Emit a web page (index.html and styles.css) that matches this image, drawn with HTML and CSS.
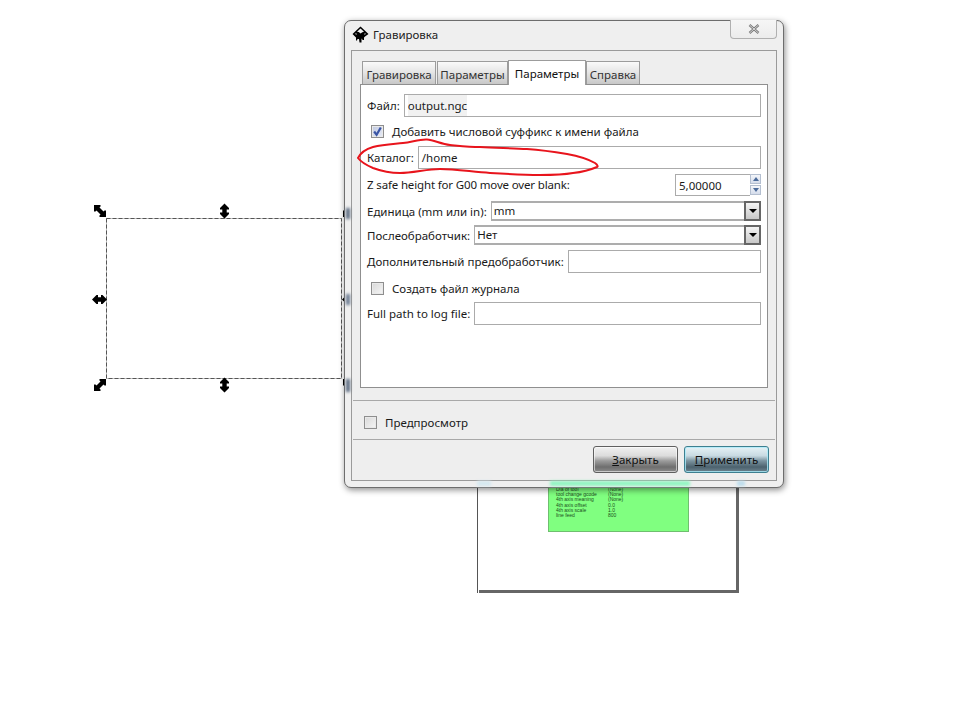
FILE: index.html
```html
<!DOCTYPE html>
<html lang="ru">
<head>
<meta charset="utf-8">
<title>Гравировка</title>
<link rel="stylesheet" href="styles.css">
</head>
<body>
<svg class="defs" width="0" height="0" aria-hidden="true">
  <defs>
    <path id="arrow" d="M0 -7.5 L4.5 -3 L4.5 -1.5 L2.2 -1.5 L2.2 1.5 L4.5 1.5 L4.5 3 L0 7.5 L-4.5 3 L-4.5 1.5 L-2.2 1.5 L-2.2 -1.5 L-4.5 -1.5 L-4.5 -3 Z"/>
    <path id="diag" d="M-6 -6 L0.5 -6 L0.5 -4.5 L-0.5 -3.5 L3.5 0.5 L4.5 -0.5 L6 -0.5 L6 6 L-0.5 6 L-0.5 4.5 L0.5 3.5 L-3.5 -0.5 L-4.5 0.5 L-6 0.5 Z"/>
  </defs>
</svg>

<main class="canvas">
  <div class="sheet">
    <div class="legend">
      <span class="lg-a">Dia of tool</span><span class="lg-b">(None)</span>
      <span class="lg-a">tool change gcode</span><span class="lg-b">(None)</span>
      <span class="lg-a">4th axis meaning</span><span class="lg-b">(None)</span>
      <span class="lg-a">4th axis offset</span><span class="lg-b">0.0</span>
      <span class="lg-a">4th axis scale</span><span class="lg-b">1.0</span>
      <span class="lg-a">line feed</span><span class="lg-b">800</span>
    </div>
  </div>

  <svg class="handles" width="290" height="200" viewBox="90 200 290 200">
    <rect class="sel-base" x="106.5" y="218.5" width="235" height="160"/>
    <rect class="sel-dash" x="106.5" y="218.5" width="235" height="160"/>
    <use href="#diag" x="100" y="211"/>
    <use href="#arrow" x="224.5" y="211"/>
    <use href="#arrow" transform="translate(99.5 299.5) rotate(90)"/>
    <use href="#diag" transform="translate(100 385) rotate(90)"/>
    <use href="#arrow" x="224.5" y="385"/>
    <use href="#diag" transform="translate(349 211) rotate(90)"/>
    <use href="#arrow" transform="translate(349.5 299.5) rotate(90)"/>
    <use href="#diag" x="349" y="385"/>
  </svg>

  <section class="window">
    <span class="glass glass-a"></span>
    <span class="glass glass-b"></span>
    <span class="glass glass-c"></span>
    <span class="glass glass-d"></span>
    <span class="glass glass-e"></span>
    <span class="glass glass-f"></span>

    <header class="titlebar">
      <svg class="app-icon" width="17" height="17" viewBox="0 0 17 17">
        <path d="M8.5 0.5 L16.5 8 L13 10.5 L12 11.5 L12 14 L10.5 14 L10 12.5 L9.5 13 L9.5 16.5 L7.5 16.5 L7 13 L5.5 13 L5 14.5 L4 14.5 L4 11.5 L0.5 8 Z" fill="#000"/>
        <path d="M8.5 2.5 L12 5.8 L10.3 6.2 L8.5 7.5 L6.8 6 L5 5.8 Z" fill="#f2f2f2"/>
        <path d="M2.8 8 L4.2 7 L5 8.8 Z M14.2 8 L12.8 7 L12 8.8 Z" fill="#bdbdbd"/>
      </svg>
      <h1 class="title">Гравировка</h1>
      <button class="close" type="button" aria-label="Закрыть окно">
        <svg width="12" height="10" viewBox="0 0 12 10">
          <path d="M1.5 1 L10.5 9 M10.5 1 L1.5 9" stroke="#7a7a7a" stroke-width="2.4" fill="none"/>
          <path d="M1.5 1 L10.5 9 M10.5 1 L1.5 9" stroke="#e8e8e8" stroke-width="0.8" fill="none"/>
        </svg>
      </button>
    </header>

    <div class="client">
      <div class="tabs">
        <span class="tab tab-1">Гравировка</span>
        <span class="tab tab-2">Параметры</span>
        <span class="tab tab-active">Параметры</span>
        <span class="tab tab-4">Справка</span>
      </div>

      <div class="panel">
        <div class="row">
          <label class="lbl">Файл:</label>
          <div class="entry grow"><span class="sel">output.ngc</span></div>
        </div>
        <div class="row check-row">
          <span class="check on">
            <svg width="11" height="11" viewBox="0 0 11 11"><path d="M2.2 5.5 L4.6 8.8 L8.8 1.5" stroke="#3a55a5" stroke-width="2.2" fill="none"/></svg>
          </span>
          <span class="lbl">Добавить числовой суффикс к имени файла</span>
        </div>
        <div class="row">
          <label class="lbl">Каталог:</label>
          <div class="entry grow">/home</div>
        </div>
        <div class="row">
          <label class="lbl grow tight">Z safe height for G00 move over blank:</label>
          <div class="entry spin">5,00000</div>
          <div class="spin-btns">
            <span class="spin-btn"><i class="tri up"></i></span>
            <span class="spin-btn"><i class="tri down"></i></span>
          </div>
        </div>
        <div class="row">
          <label class="lbl">Единица (mm или in):</label>
          <div class="combo grow"><span class="combo-text">mm</span><span class="combo-btn"><i class="tri-big"></i></span></div>
        </div>
        <div class="row">
          <label class="lbl">Послеобработчик:</label>
          <div class="combo grow"><span class="combo-text">Нет</span><span class="combo-btn"><i class="tri-big"></i></span></div>
        </div>
        <div class="row">
          <label class="lbl">Дополнительный предобработчик:</label>
          <div class="entry grow"></div>
        </div>
        <div class="row check-row">
          <span class="check"></span>
          <span class="lbl">Создать файл журнала</span>
        </div>
        <div class="row">
          <label class="lbl">Full path to log file:</label>
          <div class="entry grow"></div>
        </div>
      </div>

      <hr class="sep sep-1">
      <div class="preview">
        <span class="check"></span>
        <span class="lbl">Предпросмотр</span>
      </div>
      <hr class="sep sep-2">
      <div class="actions">
        <button class="btn" type="button"><u>З</u>акрыть</button>
        <button class="btn btn-default" type="button"><u>П</u>рименить</button>
      </div>
    </div>
  </section>

  <svg class="ink" width="250" height="45" viewBox="355 135 250 45">
    <path d="M358 158 C361 152 366 149 373 147 C384 144 394 144 403 143 C412 142 420 139 427 139.5 C434 140 441 144 450 145 C461 146 470 147 480 147 C497 148 512 148 527 149 C541 150 555 152 567 154 C578 156 588 159 595 163 C598 165 598 167 597 167 C590 170 582 172 573 173 C562 175 551 175 540 175 C523 175 506 174 490 173 C473 172 456 169 440 169 C427 169 413 173 400 173 C390 173 381 171 373 168 C366 165 361 162 358 158 Z" fill="none" stroke="#e8141c" stroke-width="2"/>
  </svg>
</main>
</body>
</html>
```
FILE: styles.css
```css
* { box-sizing: border-box; }
html, body { margin: 0; padding: 0; background: #fff; }
body { width: 966px; height: 722px; overflow: hidden; font-family: "Noto Sans", sans-serif; font-size: 11.5px; color: #1a1a1a; }
.defs { position: absolute; }
.canvas { position: relative; width: 966px; height: 722px; }

/* Canvas drawing */
.sheet { position: absolute; left: 477px; top: 300px; width: 262px; height: 293px; background: #fff; border: 1px solid #555; border-right: 0; border-bottom: 0; }
.sheet::after { content: ""; position: absolute; left: 1px; right: 0; bottom: 0; height: 3px; background: #666; }
.sheet::before { content: ""; position: absolute; top: 1px; right: 0; bottom: 0; width: 3px; background: #666; }
.legend { position: absolute; left: 70px; top: 60px; width: 141px; height: 171px; background: #80ff80; border: 1px solid #6fbf6f; display: grid; grid-template-columns: 52px 1fr; grid-auto-rows: 5.2px; padding: 125px 0 0 7px; font-family: "Liberation Sans", sans-serif; font-size: 5px; line-height: 5.2px; color: #1d4f1d; align-content: start; }
.lg-a, .lg-b { white-space: nowrap; }

.handles { position: absolute; left: 90px; top: 200px; }
.sel-base { fill: none; stroke: #c4c4c4; stroke-width: 1; }
.sel-dash { fill: none; stroke: #555; stroke-width: 1; stroke-dasharray: 4 2; }

/* Window */
.window { position: absolute; left: 344px; top: 20px; width: 440px; height: 468px; background: #efefef; border: 1px solid #6d6d6d; border-radius: 7px; box-shadow: 1px 2px 6px rgba(0,0,0,0.45); }
.glass { position: absolute; filter: blur(1.5px); }
.glass-a { left: 1px; top: 187px; width: 4px; height: 11px; background: #5a6a80; }
.glass-b { left: 1px; top: 273px; width: 4px; height: 11px; background: #6a7a90; }
.glass-c { left: 1px; top: 358px; width: 4px; height: 13px; background: #5a6a80; }
.glass-d { left: 205px; top: 460px; width: 140px; height: 5px; background: #90f5c0; }
.glass-e { left: 132px; top: 460px; width: 14px; height: 5px; background: #d4e8f0; }
.glass-f { left: 392px; top: 460px; width: 8px; height: 5px; background: #bcdcec; }

.titlebar { height: 27px; display: flex; align-items: center; padding: 0 0 0 7px; margin-bottom: 2px; position: relative; }
.app-icon { flex: none; }
.title { margin: 0 0 0 4px; font-weight: 400; font-size: 11.5px; color: #222; }
.close { position: absolute; right: 6px; top: -1px; width: 47px; height: 19px; border: 1px solid #b0b0b0; border-top: 0; border-radius: 0 0 4px 4px; background: linear-gradient(#f6f6f6, #ececec); padding: 0; display: flex; align-items: center; justify-content: center; }

.client { margin: 0 6px 0 6px; height: 431px; border: 1px solid #9a9a9a; background: #eeeeee; padding: 0; }

/* Tabs */
.tabs { display: flex; align-items: flex-end; height: 33px; padding-left: 10px; }
.tab { height: 23px; display: flex; align-items: center; justify-content: center; border: 1px solid #9c9c9c; border-bottom: 0; background: linear-gradient(#fafafa 0%, #e6e6e6 45%, #c8c8c8 100%); color: #333; margin-right: 1px; padding-top: 2px; }
.tab-1 { width: 74px; }
.tab-2 { width: 71px; margin-right: 0; }
.tab-active { width: 78px; height: 25px; background: #fff; color: #111; margin-bottom: -1px; position: relative; z-index: 1; margin-right: 0; padding-top: 1px; }
.tab-4 { width: 54px; }

.panel { margin-left: 8px; width: 408px; height: 304px; background: #fff; border: 1px solid #8f8f8f; padding: 9px 6px 0 6px; display: grid; grid-template-rows: 23px 29px 23px 31px 22px 26px 27px 26px 25px; align-content: start; }
.row { display: flex; align-items: center; min-width: 0; }
.lbl { white-space: nowrap; }
.tight { letter-spacing: -0.15px; }
.row > .lbl { margin-right: 4px; }
.grow { flex: 1 1 0; min-width: 0; }
.entry { height: 23px; border: 1px solid #ababab; background: #fff; padding: 0 3px; line-height: 21px; color: #1a1a1a; white-space: nowrap; }
.sel { background: #f1f1f1; display: inline-block; height: 21px; }
.check-row { padding-left: 4px; }
.check { flex: none; width: 13px; height: 13px; border: 1px solid #8e8e8e; background: linear-gradient(135deg, #d8d8d8, #f6f6f6); box-shadow: inset 0 0 0 1px #e9e9e9; margin-right: 8px; display: inline-flex; align-items: center; justify-content: center; }
.check.on { background: linear-gradient(135deg, #c0c8e0, #e8ecf6); }

.spin { flex: none; width: 75px; height: 22px; border-right: 0; }
.spin-btns { flex: none; width: 11px; margin-left: 0; display: flex; flex-direction: column; gap: 1px; height: 21px; }
.spin-btn { flex: 1; border: 1px solid #b4bfd0; background: linear-gradient(#f4f6fa, #d4dceb); display: flex; align-items: center; justify-content: center; }
.tri { width: 0; height: 0; border-left: 3px solid transparent; border-right: 3px solid transparent; }
.tri.up { border-bottom: 4px solid #4a6a9a; }
.tri.down { border-top: 4px solid #4a6a9a; }

.combo { height: 20px; border: 2px solid #adadad; border-width: 2px 1px 2px 1px; background: #fff; display: flex; align-items: stretch; }
.combo-text { flex: 1; padding-left: 2px; line-height: 16px; color: #1a1a1a; }
.combo-btn { flex: none; width: 17px; margin: -2px -1px; border: 2px solid #666; background: linear-gradient(#f4f4f4, #c8c8c8); display: flex; align-items: center; justify-content: center; }
.tri-big { width: 0; height: 0; border-left: 4px solid transparent; border-right: 4px solid transparent; border-top: 4px solid #000; }

.sep { height: 1px; border: 0; background: #a8a8a8; margin: 0 0 0 1px; width: 422px; }
.sep-1 { margin-top: 12px; }
.preview { height: 38px; display: flex; align-items: center; padding: 4px 0 0 12px; }
.actions { display: flex; justify-content: flex-end; gap: 6px; padding: 6px 7px 0 0; }
.btn { width: 85px; height: 27px; border: 1px solid #5f5f5f; border-radius: 3px; font: inherit; color: #111; padding: 0; box-shadow: inset 0 0 0 1px rgba(255,255,255,0.55); background: linear-gradient(#f0f0f0 0%, #dcdcdc 35%, #9c9c9c 55%, #6e6e6e 80%, #8c8c8c 100%); }
.btn-default { border-color: #3d7f90; box-shadow: inset 0 0 0 1px rgba(170,235,250,0.8); background: linear-gradient(#e6f2f6 0%, #c8dae2 35%, #7c94a0 55%, #4c626e 80%, #6e8490 100%); }

.ink { position: absolute; left: 355px; top: 135px; pointer-events: none; }
```
